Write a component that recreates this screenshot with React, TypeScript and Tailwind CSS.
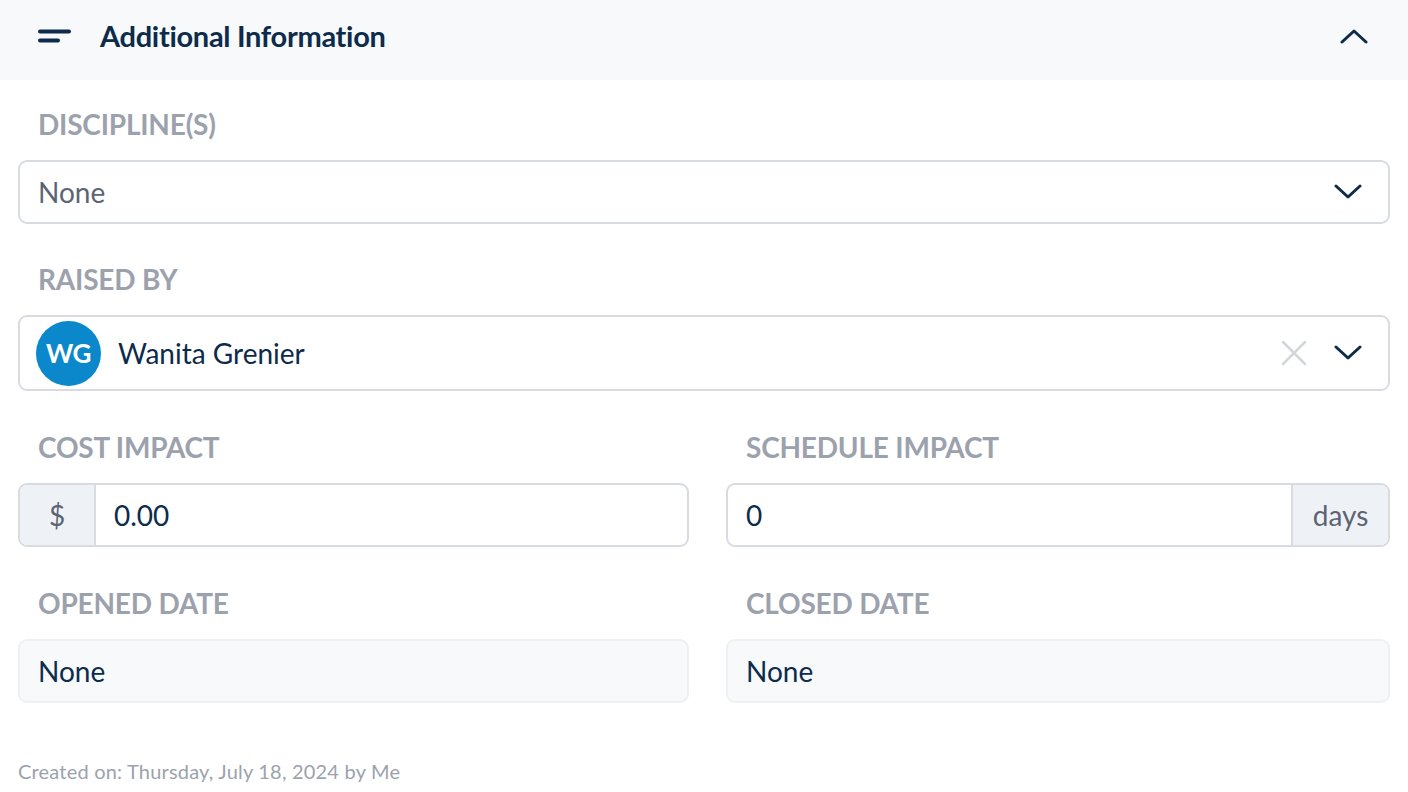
const font = { fontFamily: 'Lato, "Open Sans", sans-serif' };

function ChevronDown() {
  return (
    <svg width="28" height="16" viewBox="0 0 28 16" fill="none">
      <polyline points="2,2 14,13 26,2" stroke="#0d2b4b" strokeWidth="3" strokeLinecap="round" strokeLinejoin="round" />
    </svg>
  );
}

function ChevronUp() {
  return (
    <svg width="28" height="16" viewBox="0 0 28 16" fill="none">
      <polyline points="2,14 14,3 26,14" stroke="#0d2b4b" strokeWidth="3" strokeLinecap="round" strokeLinejoin="round" />
    </svg>
  );
}

function ClearIcon() {
  return (
    <svg width="26" height="26" viewBox="0 0 26 26" fill="none">
      <line x1="2" y1="2" x2="24" y2="24" stroke="#d3d6da" strokeWidth="2.5" strokeLinecap="round" />
      <line x1="24" y1="2" x2="2" y2="24" stroke="#d3d6da" strokeWidth="2.5" strokeLinecap="round" />
    </svg>
  );
}

function Label({ children }: { children: React.ReactNode }) {
  return (
    <div className="h-[40px] flex items-center px-[20px] text-[28px] font-bold tracking-[-0.2px] text-[#9ca2ad] uppercase">
      {children}
    </div>
  );
}

export default function App() {
  return (
    <div className="w-[1408px] h-[792px] bg-white overflow-hidden" style={font}>
      <header className="h-[80px] pb-[8px] bg-[#f7f9fb] flex items-center pl-[38px] pr-[40px]">
        <svg width="34" height="14" viewBox="0 0 34 14" fill="none">
          <line x1="2" y1="2.5" x2="31" y2="2.5" stroke="#0d2b4b" strokeWidth="4" strokeLinecap="round" />
          <line x1="2" y1="11.5" x2="20" y2="11.5" stroke="#0d2b4b" strokeWidth="4" strokeLinecap="round" />
        </svg>
        <h2 className="ml-[28px] text-[29px] font-bold text-[#0d2b4b] tracking-[-0.3px]">Additional Information</h2>
        <div className="ml-auto">
          <ChevronUp />
        </div>
      </header>

      <main className="px-[18px] pt-[24px]">
        <Label>Discipline(s)</Label>
        <div className="mt-[16px] h-[64px] rounded-[9px] border-2 border-[#d8dbdf] flex items-center pl-[18px] pr-[26px]">
          <span className="text-[28px] text-[#5c6473]">None</span>
          <span className="ml-auto"><ChevronDown /></span>
        </div>

        <div className="mt-[35px]">
          <Label>Raised By</Label>
        </div>
        <div className="mt-[16px] h-[76px] rounded-[9px] border-2 border-[#d8dbdf] flex items-center pl-[16px] pr-[26px]">
          <div className="w-[65px] h-[65px] rounded-full bg-[#0b88cb] flex items-center justify-center text-white text-[26px] font-bold tracking-[-0.5px]">
            WG
          </div>
          <span className="ml-[17px] text-[28px] text-[#0d2b4b]">Wanita Grenier</span>
          <span className="ml-auto"><ClearIcon /></span>
          <span className="ml-[27px]"><ChevronDown /></span>
        </div>

        <div className="mt-[36px] grid grid-cols-[671px_1fr] gap-x-[37px]">
          <div>
            <Label>Cost Impact</Label>
            <div className="mt-[16px] h-[64px] rounded-[9px] border-2 border-[#d8dbdf] flex overflow-hidden">
              <div className="w-[76px] bg-[#eef2f7] border-r-2 border-[#d8dbdf] flex items-center justify-center text-[28px] text-[#5c6473]">
                $
              </div>
              <div className="flex items-center pl-[18px] text-[28px] text-[#0d2b4b]">0.00</div>
            </div>
          </div>
          <div>
            <Label>Schedule Impact</Label>
            <div className="mt-[16px] h-[64px] rounded-[9px] border-2 border-[#d8dbdf] flex overflow-hidden">
              <div className="flex-1 flex items-center pl-[18px] text-[28px] text-[#0d2b4b]">0</div>
              <div className="w-[97px] bg-[#eef2f7] border-l-2 border-[#d8dbdf] flex items-center justify-center text-[28px] text-[#5c6473]">
                days
              </div>
            </div>
          </div>
        </div>

        <div className="mt-[36px] grid grid-cols-[671px_1fr] gap-x-[37px]">
          <div>
            <Label>Opened Date</Label>
            <div className="mt-[16px] h-[64px] rounded-[9px] border-2 border-[#eef0f3] bg-[#f7f9fb] flex items-center pl-[18px] text-[28px] text-[#0d2b4b]">
              None
            </div>
          </div>
          <div>
            <Label>Closed Date</Label>
            <div className="mt-[16px] h-[64px] rounded-[9px] border-2 border-[#eef0f3] bg-[#f7f9fb] flex items-center pl-[18px] text-[28px] text-[#0d2b4b]">
              None
            </div>
          </div>
        </div>

        <p className="mt-[53px] text-[20px] tracking-[0.2px] text-[#9ca2ad]">Created on: Thursday, July 18, 2024 by Me</p>
      </main>
    </div>
  );
}
